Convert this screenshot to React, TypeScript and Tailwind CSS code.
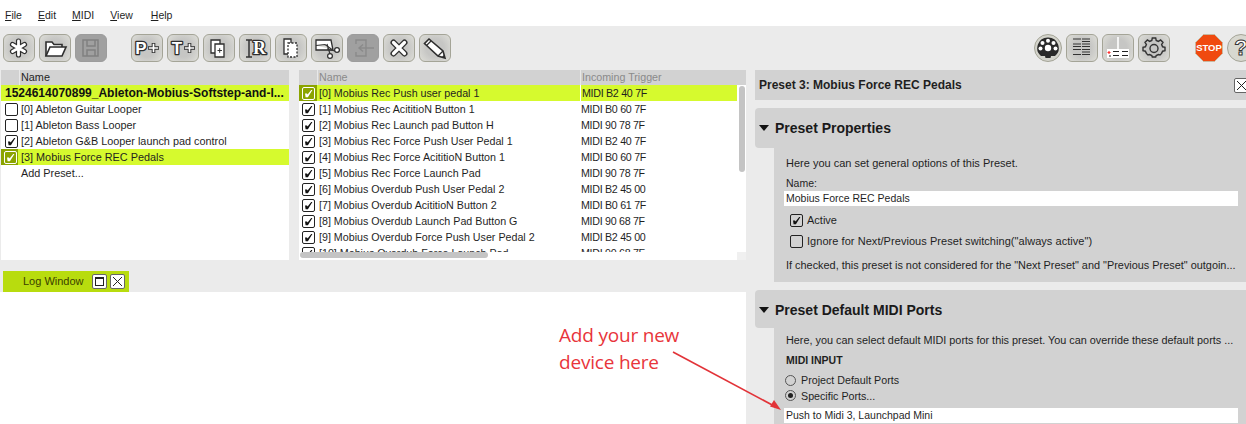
import React from "react";

const Btn = ({ children, disabled, round }: { children?: React.ReactNode; disabled?: boolean; round?: boolean }) => (
  <div
    className={
      "w-[32px] h-[28px] flex items-center justify-center shrink-0 border " +
      (round ? "rounded-full " : "rounded-[6px] ") +
      (disabled
        ? "bg-[#a0a0a0] border-[#9c9c9c]"
        : "border-[#a4a497] bg-[radial-gradient(circle,#c6c6c4_45%,#deded8_100%)]")
    }
  >
    <svg width="28" height="24" viewBox="0 0 28 24" fill="none">
      {children}
    </svg>
  </div>
);

const S = { stroke: "#2e2e2e", strokeWidth: 1.6, fill: "#fff" };
const G = ({ t, x = 14, size = 17, serif }: { t: string; x?: number; size?: number; serif?: boolean }) => (
  <text
    x={x}
    y="18"
    textAnchor="middle"
    fontFamily={serif ? "'Liberation Serif', serif" : "'Liberation Sans', sans-serif"}
    fontWeight="700"
    fontSize={size}
    fill="#fff"
    stroke="#2e2e2e"
    strokeWidth="2.6"
    paintOrder="stroke"
    strokeLinejoin="round"
  >
    {t}
  </text>
);

const Plus = () => (
  <>
    <path d="M15 12 H26 M20.5 7 V17" stroke="#2e2e2e" strokeWidth="3.6" />
    <path d="M15.8 12 H25.2 M20.5 7.8 V16.2" stroke="#fff" strokeWidth="1.7" />
  </>
);

const Check = ({ on, sel, small }: { on?: boolean; sel?: boolean; small?: boolean }) => (
  <div
    className={
      "w-[13px] h-[13px] rounded-[2px] border flex items-center justify-center shrink-0 " +
      (sel ? "border-white bg-[#8ba400]" : "border-[#222222] " + (small ? "bg-[#d2d2d2]" : "bg-white"))
    }
  >
    {on && (
      <svg width="9" height="9" viewBox="0 0 9 9">
        <path d="M1 4.5 L3 4.5 L3.6 5.6 L7.2 1 L8.4 1 L3.9 8.2 L1.6 8.2 Z" fill={sel ? "#fff" : "#111"} />
      </svg>
    )}
  </div>
);

const presets = [
  ["[0] Ableton Guitar Looper", false],
  ["[1] Ableton Bass Looper", false],
  ["[2] Ableton G&B Looper launch pad control", true],
] as const;

const rows = [
  ["[1] Mobius Rec AcititioN Button 1", "MIDI B0 60 7F"],
  ["[2] Mobius Rec Launch pad Button H", "MIDI 90 78 7F"],
  ["[3] Mobius Rec Force Push User Pedal 1", "MIDI B2 40 7F"],
  ["[4] Mobius Rec Force AcititioN Button 1", "MIDI B0 60 7F"],
  ["[5] Mobius Rec Force Launch Pad", "MIDI 90 78 7F"],
  ["[6] Mobius Overdub Push User Pedal 2", "MIDI B2 45 00"],
  ["[7] Mobius Overdub AcititioN Button 2", "MIDI B0 61 7F"],
  ["[8] Mobius Overdub Launch Pad Button G", "MIDI 90 68 7F"],
  ["[9] Mobius Overdub Force Push User Pedal 2", "MIDI B2 45 00"],
  ["[10] Mobius Overdub Force Launch Pad", "MIDI 90 68 7F"],
];

const SecHead = ({ t, h }: { t: string; h: string }) => (
  <div className={"flex items-center bg-[#d2d2d2] rounded-tl-[4px] rounded-bl-[4px] pl-[3px] " + h}>
    <svg width="13" height="8" viewBox="0 0 13 8" className="shrink-0">
      <path d="M1 1 H11 L6 7 Z" fill="#111" />
    </svg>
    <span className="ml-[4px] text-[14px] font-bold text-[#1a1a1a]">{t}</span>
  </div>
);

const XBox = ({ cls }: { cls?: string }) => (
  <div className={"w-[15px] h-[15px] rounded-[2px] border border-[#666666] bg-white flex items-center justify-center shrink-0 " + (cls ?? "")}>
    <svg width="11" height="11" viewBox="0 0 11 11">
      <path d="M1 1 L10 10 M10 1 L1 10" stroke="#222" strokeWidth="1" />
    </svg>
  </div>
);

export default function App() {
  return (
    <div className="relative w-[1246px] h-[424px] overflow-hidden bg-[#ebebeb] text-[11px] leading-[16px] text-[#1f1f1f] font-['Liberation_Sans',Arial,sans-serif]">
      {/* menu */}
      <div className="h-[26px] bg-white flex items-center gap-[16px] pl-[5px] pt-[4px] text-[10.5px]">
        {["File", "Edit", "MIDI", "View", "Help"].map((m, i) => (
          <span key={m} className={i === 3 ? "mr-[2px]" : ""}>
            <span className="underline">{m[0]}</span>
            {m.slice(1)}
          </span>
        ))}
      </div>
      {/* toolbar */}
      <div className="h-[41px] flex items-start pt-[8px] pl-[3px]">
        <div className="flex gap-[4px]">
          <Btn>
            <path d="M13.5 5 V19 M7.5 8.5 L19.5 15.5 M19.5 8.5 L7.5 15.5" stroke="#2e2e2e" strokeWidth="5.2" strokeLinecap="round" />
            <path d="M13.5 5 V19 M7.5 8.5 L19.5 15.5 M19.5 8.5 L7.5 15.5" stroke="#fff" strokeWidth="2.8" strokeLinecap="round" />
          </Btn>
          <Btn>
            <path d="M5 20 V6 H11 L13 8.5 H21 V11" {...S} />
            <path d="M5 20 L9 11 H25 L21 20 Z" {...S} />
          </Btn>
          <Btn disabled>
            <path d="M6 4 H21 V20 H6 Z M10 4 V10 H18 V4 M10 20 V14 H18 V20" stroke="#808080" strokeWidth="1.5" fill="none" />
          </Btn>
        </div>
        <div className="flex gap-[4px] ml-[24px]">
          <Btn>
            <G t="P" x={8} size={17} />
            <Plus />
          </Btn>
          <Btn>
            <G t="T" x={8} size={17} />
            <Plus />
          </Btn>
          <Btn>
            <path d="M6 4 H15 V17 H6 Z" {...S} strokeWidth={1.3} />
            <path d="M10 8 H19 V21 H10 Z" {...S} strokeWidth={1.3} />
            <path d="M12.5 14.5 H17 M14.7 12.2 V16.8" stroke="#333" strokeWidth="1" />
          </Btn>
          <Btn>
            <path d="M5 4 H11 M5 21 H11 M8 4 V21" stroke="#333" strokeWidth="1.5" />
            <G t="R" x={18.5} size={18} serif />
          </Btn>
          <Btn>
            <path d="M7 3 H14 V18 H7 Z" {...S} strokeWidth={1.3} />
            <path d="M11 7 H20 V21 H11 Z" {...S} strokeWidth={1.3} strokeDasharray="2 1.5" />
          </Btn>
          <Btn>
            <path d="M3 4 H18 L20 14 H3 Z" {...S} strokeWidth={1.3} />
            <path d="M3 9.5 L12 8.5 L19 13.5" stroke="#333" strokeWidth="1.2" fill="#dcdcd8" />
            <circle cx="17" cy="20" r="2.4" {...S} strokeWidth={1.2} />
            <circle cx="24" cy="14" r="2.4" {...S} strokeWidth={1.2} />
            <path d="M14 8 L17 18 M22 15 L14 13" stroke="#333" strokeWidth="1.2" />
          </Btn>
          <Btn disabled>
            <path d="M7 8 V4 H17 V20 H7 V16" stroke="#8a8a8a" strokeWidth="1.4" fill="none" />
            <path d="M10 12 H25 M14 8.5 L10 12 L14 15.5" stroke="#8a8a8a" strokeWidth="1.4" fill="none" />
          </Btn>
          <Btn>
            <path d="M8.5 6.5 L19.5 17.5 M19.5 6.5 L8.5 17.5" stroke="#2e2e2e" strokeWidth="6" strokeLinecap="round" />
            <path d="M8.5 6.5 L19.5 17.5 M19.5 6.5 L8.5 17.5" stroke="#fff" strokeWidth="3.2" strokeLinecap="round" />
          </Btn>
          <Btn>
            <path d="M8 3 L3.5 7.5 L17 20 L24 22 L22 15 Z" {...S} />
            <path d="M5.5 9.5 L10 5 M17 20 L22 15" stroke="#2e2e2e" strokeWidth="1.3" />
            <path d="M21 20.5 L24 22 L23 19 Z" fill="#2e2e2e" />
          </Btn>
        </div>
        <div className="flex gap-[4px] ml-auto mr-[25px]">
          <div className="w-[28px] h-[28px] rounded-full border border-[#a4a497] bg-[#d4d4cc] flex items-center justify-center">
            <svg width="24" height="24" viewBox="0 0 24 24">
              <path d="M12 1.5 A10.5 10.5 0 0 1 19 20 L15 20 L14.5 22 H9.5 L9 20 L5 20 A10.5 10.5 0 0 1 12 1.5 Z" fill="#2a2a2a" />
              <circle cx="12" cy="4.8" r="2" fill="#fff" />
              <circle cx="6.5" cy="7" r="2" fill="#fff" />
              <circle cx="17.5" cy="7" r="2" fill="#fff" />
              <circle cx="4.5" cy="12.5" r="2" fill="#fff" />
              <circle cx="19.5" cy="12.5" r="2" fill="#fff" />
              <circle cx="12" cy="12" r="3.2" fill="#fff" />
            </svg>
          </div>
          <Btn>
            <path d="M5 3 H23 M14 5.5 H23 M5 8 H23 M5 10.5 H23 M5 13.5 H23 M14 16 H23 M5 18.5 H23" stroke="#333" strokeWidth="1.2" strokeDasharray="8 1" />
          </Btn>
          <Btn>
            <path d="M14 1 V13" stroke="#fff" strokeWidth="1.6" />
            <rect x="3" y="13" width="22" height="9" fill="#fff" />
            <path d="M5 15 V18 M3.5 16.5 H6.5" stroke="#f33" strokeWidth="1.2" />
            <path d="M9 15.5 H15 M18 15.5 H24 M9 19.5 H15 M18 19.5 H24 M6 19 V21" stroke="#222" strokeWidth="1" />
          </Btn>
          <Btn>
            <path
              d="M12.3 3 H15.7 L16.2 5.4 L18.4 6.4 L20.6 5 L23 7.4 L21.6 9.6 L22.6 11.8 L25 12.3 V15.7 L22.6 16.2 L21.6 18.4 L20 20 L18.4 19.6 L16.2 20.6 L15.7 22 H12.3 L11.8 20.6 L9.6 19.6 L8 20 L6.4 18.4 L5.4 16.2 L3 15.7 V12.3 L5.4 11.8 L6.4 9.6 L5 7.4 L7.4 5 L9.6 6.4 L11.8 5.4 Z"
              fill="none"
              stroke="#333"
              strokeWidth="1.4"
              transform="translate(0 -1)"
            />
            <circle cx="14" cy="12.5" r="4" fill="none" stroke="#333" strokeWidth="1.4" />
          </Btn>
        </div>
        <div className="flex gap-[4px] w-[51px] overflow-hidden shrink-0">
          <div className="w-[28px] h-[28px] shrink-0 relative flex items-center justify-center">
            <svg className="absolute inset-0" width="28" height="28" viewBox="0 0 28 28">
              <path d="M8.5 0.5 H19.5 L27.5 8.5 V19.5 L19.5 27.5 H8.5 L0.5 19.5 V8.5 Z" fill="#f04a10" stroke="#c8b8a0" />
            </svg>
            <span className="relative text-[9.5px] leading-[12px] font-bold text-white">STOP</span>
          </div>
          <div className="w-[28px] h-[28px] rounded-full border border-[#a4a497] bg-[#d8d8d0] flex items-center justify-center shrink-0">
            <span className="text-[22px] leading-[24px] font-bold text-white [-webkit-text-stroke:1px_#333333]">?</span>
          </div>
        </div>
      </div>
      {/* main */}
      <div className="flex h-[357px] pt-[3px]">
        <div className="w-[755px] flex flex-col shrink-0">
          <div className="flex h-[190px] text-[10.7px]">
            {/* presets */}
            <div className="ml-[1px] w-[288px] bg-white text-[10.85px]">
              <div className="h-[15px] bg-[#d2d2d2] flex">
                <div className="w-[19px] border-r border-[#e8e8e8]" />
                <span className="pl-[1px] leading-[15px]">Name</span>
              </div>
              <div className="h-[16px] bg-[#d6fa2e] pl-[4px] font-bold text-[12px] text-[#111111] whitespace-nowrap">
                1524614070899_Ableton-Mobius-Softstep-and-l...
              </div>
              {presets.map(([t, on]) => (
                <div key={t} className="h-[16px] flex items-center pl-[4px] gap-[3px]">
                  <Check on={on} />
                  <span>{t}</span>
                </div>
              ))}
              <div className="h-[16px] flex items-center bg-[#d6fa2e]">
                <div className="h-[16px] bg-[#8ba400] flex items-center w-[17px] pl-[3px] mr-[3px]">
                  <Check on sel />
                </div>
                <span>[3] Mobius Force REC Pedals</span>
              </div>
              <div className="h-[16px] pl-[20px]">Add Preset...</div>
            </div>
            {/* translators */}
            <div className="ml-[10px] w-[447px] bg-white relative overflow-hidden">
              <div className="h-[15px] bg-[#d2d2d2] flex text-[#8a8a8a]">
                <div className="w-[19px] border-r border-[#e8e8e8] shrink-0" />
                <span className="pl-[1px] w-[262px] leading-[15px]">Name</span>
                <span className="border-l border-[#e8e8e8] pl-[1px] leading-[15px]">Incoming Trigger</span>
              </div>
              <div className="h-[16px] flex items-center bg-[#d6fa2e] mr-[9px]">
                <div className="w-[18px] h-[16px] bg-[#8ba400] flex items-center pl-[3px] mr-[2px]">
                  <Check on sel />
                </div>
                <span className="w-[261px]">[0] Mobius Rec Push user pedal 1</span>
                <span className="pl-[1px] border-l border-white tracking-[-0.3px]">MIDI B2 40 7F</span>
              </div>
              {rows.map(([a, b]) => (
                <div key={a} className="h-[16px] flex items-center">
                  <div className="w-[20px] flex items-center pl-[3px]">
                    <Check on />
                  </div>
                  <span className="w-[262px] whitespace-nowrap">{a}</span>
                  <span className="tracking-[-0.3px]">{b}</span>
                </div>
              ))}
              <div className="absolute left-[0px] right-0 top-[182px] h-[8px] bg-white" />
              <div className="absolute left-[1px] top-[182px] w-[188px] h-[6px] rounded-[3px] bg-[#c4c4c4]" />
              <div className="absolute right-0 top-[182px] w-[9px] h-[8px] bg-[#f0f0f0]" />
              <div className="absolute right-[1px] top-[16px] w-[6px] h-[86px] rounded-[3px] bg-[#c4c4c4]" />
            </div>
          </div>
          {/* log */}
          <div className="h-[11px]" />
          <div className="ml-[3px] w-[126px] h-[21px] bg-[#b8dc0e] flex items-center pl-[20px] text-[#3a3f00]">
            <span className="w-[69px] -mt-[2px]">Log Window</span>
            <div className="w-[15px] h-[15px] rounded-[2px] border border-[#666666] bg-white flex items-center justify-center mr-[3px] -mt-[1px]">
              <div className="w-[9px] h-[9px] border border-[#222222] border-t-2" />
            </div>
            <XBox cls="-mt-[1px]" />
          </div>
          <div className="flex-1 bg-white mr-[9px]" />
        </div>
        {/* right */}
        <div className="flex-1 min-w-0">
          <div className="h-[30px] bg-[#d2d2d2] flex items-center justify-between font-bold text-[12px] pl-[4px] overflow-hidden">
            <span>Preset 3: Mobius Force REC Pedals</span>
            <XBox cls="mr-[-3px]" />
          </div>
          <div className="h-[8px]" />
          <SecHead t="Preset Properties" h="h-[40px]" />
          <div className="ml-[19px] h-[134px] bg-[#d2d2d2] pl-[12px] pt-[7px] flex flex-col">
            <div className="h-[16px]">Here you can set general options of this Preset.</div>
            <div className="h-[16px] mt-[4px] text-[10.5px] leading-[16px]">Name:</div>
            <div className="-ml-[2px] w-[454px] h-[15px] bg-white pl-[2px] leading-[15px] text-[10.5px]">Mobius Force REC Pedals</div>
            <div className="h-[16px] mt-[6px] flex items-center pl-[4px] gap-[4px]">
              <Check on small />
              <span>Active</span>
            </div>
            <div className="h-[16px] mt-[5px] flex items-center pl-[4px] gap-[4px]">
              <Check small />
              <span className="tracking-[0.05px]">Ignore for Next/Previous Preset switching("always active")</span>
            </div>
            <div className="h-[16px] mt-[8px] whitespace-nowrap text-[10.9px]">If checked, this preset is not considered for the "Next Preset" and "Previous Preset" outgoin...</div>
          </div>
          <div className="h-[8px]" />
          <SecHead t="Preset Default MIDI Ports" h="h-[38px] pt-[2px]" />
          <div className="ml-[19px] h-[120px] bg-[#d2d2d2] pl-[12px] pt-[4px] flex flex-col">
            <div className="h-[16px] whitespace-nowrap text-[10.85px]">Here, you can select default MIDI ports for this preset. You can override these default ports ...</div>
            <div className="h-[16px] mt-[4px] font-bold text-[10.5px]">MIDI INPUT</div>
            <div className="h-[16px] mt-[4px] -ml-[1px] flex items-center gap-[5px]">
              <div className="w-[11px] h-[11px] rounded-full border border-[#555555] bg-[#d2d2d2]" />
              <span className="text-[10.7px]">Project Default Ports</span>
            </div>
            <div className="h-[15px] -ml-[1px] flex items-center gap-[5px]">
              <div className="w-[11px] h-[11px] rounded-full border border-[#555555] flex items-center justify-center">
                <div className="w-[5px] h-[5px] rounded-full bg-[#222222]" />
              </div>
              <span className="text-[10.7px]">Specific Ports...</span>
            </div>
            <div className="-ml-[2px] w-[454px] h-[15px] mt-[5px] bg-white pl-[2px] leading-[15px] text-[10.5px]">Push to Midi 3, Launchpad Mini</div>
          </div>
        </div>
      </div>
      {/* annotation */}
      <div className="absolute left-[559px] top-[322px] text-[19px] leading-[27px] text-[#e8353b] font-['Open_Sans',sans-serif] tracking-[-0.2px]">
        Add your new
        <br />
        device here
      </div>
      <svg className="absolute left-[660px] top-[345px]" width="130" height="70" viewBox="0 0 130 70">
        <path d="M13 7 L116 62" stroke="#e23338" strokeWidth="1.6" />
        <path d="M121 65 L110 61.5 L114 55 Z" fill="#e23338" />
      </svg>
    </div>
  );
}
